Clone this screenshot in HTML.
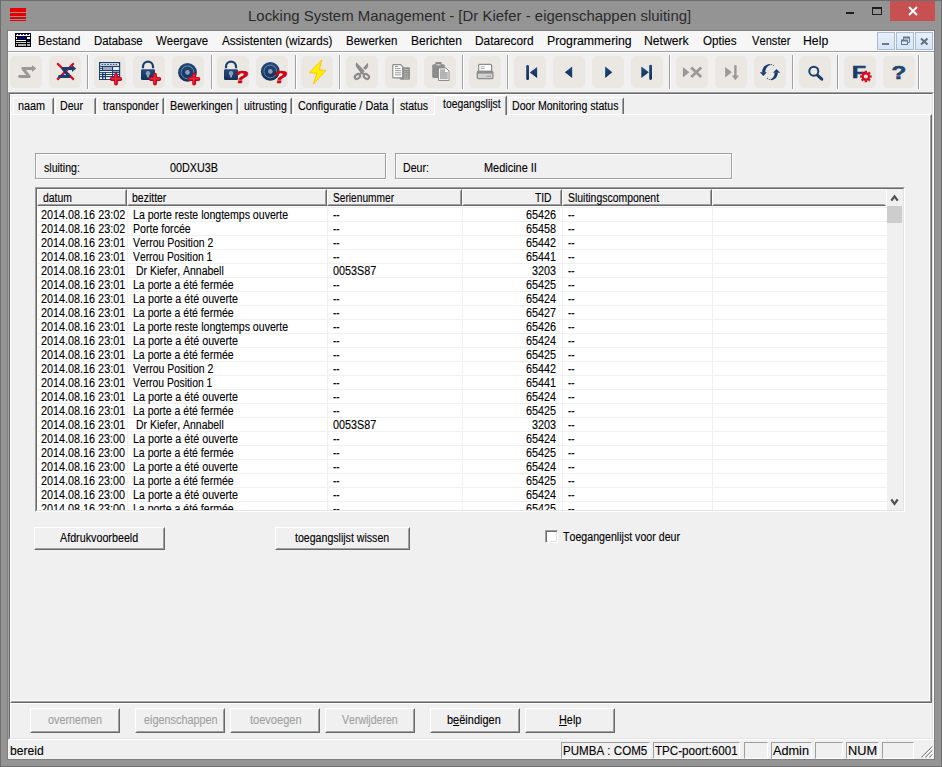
<!DOCTYPE html>
<html><head><meta charset="utf-8"><title>Locking System Management</title>
<style>
*{box-sizing:border-box;margin:0;padding:0}
html,body{width:942px;height:767px;overflow:hidden;background:#949494}
body{position:relative;font-family:"Liberation Sans",sans-serif;font-size:11px;color:#000}
.a{position:absolute}
#frame{left:0;top:0;width:942px;height:767px;border:1px solid #6e6e6e;background:#949494}
#frameb{left:7px;top:30px;width:928px;height:730px;border:1px solid #808080}
#title{left:0;top:6px;width:942px;text-align:center;font-size:15px;line-height:18px;color:#1a1a1a;white-space:nowrap;letter-spacing:-0.05px}
#menubar{left:8px;top:31px;width:926px;height:20px;background:#f6f6f7}
.mdi{top:32px;width:18px;height:18px;border:1px solid #a9bcd6;background:linear-gradient(#e8f0fa,#d7e5f6)}
#toolbar{left:8px;top:51px;width:926px;height:41px;background:#f0f0f0;border-top:1px solid #a0a0a0;box-shadow:inset 0 1px 0 #fff}
.tb{position:absolute;top:56px;width:32px;height:32px;border-radius:5px;background:#ebe8e3}
.sep{position:absolute;top:55px;width:2px;height:34px;border-left:1px solid #a0a0a0;border-right:1px solid #fff}
#child{left:8px;top:92px;width:926px;height:648px;background:#f0f0f0;border:1px solid #a0a0a0;border-right-color:#fff;border-bottom-color:#fff}
#child2{left:9px;top:93px;width:924px;height:646px;border:1px solid #696969;border-right-color:#e3e3e3;border-bottom-color:#e3e3e3}
#pane{left:10px;top:114px;width:922px;height:589px;border:1px solid #fff;border-right-color:#696969;border-bottom-color:#696969}
#pane:after{content:"";position:absolute;left:0;top:0;right:0;bottom:0;border:1px solid transparent;border-right-color:#a0a0a0;border-bottom-color:#a0a0a0;box-shadow:inset -1px -1px 0 #fbfbfb}
.tab.nr{border-right:none}.tab.nr:after{display:none}
.wl{position:absolute;background:#fff}
.tab{position:absolute;top:97px;height:17px;border-left:1px solid #fff;border-top:1px solid #fff;border-right:1px solid #696969;border-radius:2px 2px 0 0}
.tab:after{content:"";position:absolute;right:0;top:1px;bottom:0;width:1px;background:#a0a0a0}
.tab.sel{top:95px;height:20px;background:#f0f0f0}
.txt{position:absolute;white-space:pre;transform-origin:0 0;font-kerning:none;-webkit-text-stroke:0.12px}
.grp{position:absolute;border:1px solid #a0a0a0;box-shadow:inset 1px 1px 0 #fff,1px 1px 0 #fff}
.btn{position:absolute;background:#f0f0f0;border:1px solid #fff;border-right-color:#696969;border-bottom-color:#696969}
.btn:after{content:"";position:absolute;left:0;top:0;right:0;bottom:0;border:1px solid #f0f0f0;border-right-color:#a0a0a0;border-bottom-color:#a0a0a0}
#list{left:35px;top:187px;width:870px;height:325px;background:#fff;border:1px solid #a0a0a0;border-right-color:#fff;border-bottom-color:#fff}
#list2{left:36px;top:188px;width:868px;height:323px;border:1px solid #696969;border-right-color:#e3e3e3;border-bottom-color:#e3e3e3}
#rows{left:0;top:0;width:942px;height:510px;overflow:hidden}
.hd{position:absolute;top:189px;height:17px;background:#f0f0f0;border:1px solid #fff;border-right-color:#696969;border-bottom-color:#696969}
.hd:after{content:"";position:absolute;left:0;top:0;right:0;bottom:0;border:1px solid transparent;border-right-color:#a0a0a0;border-bottom-color:#a0a0a0}
.hd.last{border-right-color:#f0f0f0}.hd.last:after{border-right-color:transparent}
.hl{position:absolute;left:37px;width:850px;height:1px;background:#f0f0f0}
.vl{position:absolute;top:206px;width:1px;height:304px;background:#f0f0f0}
#cb{left:545px;top:530px;width:13px;height:13px;background:#fff;border:1px solid #a0a0a0;border-right-color:#fff;border-bottom-color:#fff;box-shadow:inset 1px 1px 0 #696969,inset -1px -1px 0 #e3e3e3}
#status{left:8px;top:740px;width:926px;height:19px;background:#f0f0f0}
.sp{position:absolute;top:742px;height:17px;border:1px solid #a0a0a0;border-right-color:#fff;border-bottom-color:#fff}
u{text-decoration:underline}
</style></head><body>
<svg width="0" height="0" style="position:absolute"><defs><linearGradient id="gb" x1="0" y1="0" x2="0" y2="1"><stop offset="0" stop-color="#234a7c"/><stop offset="1" stop-color="#11305a"/></linearGradient></defs></svg>
<div class="a" id="frame"></div><div class="a" id="frameb"></div>
<div class="a" style="left:10px;top:8px;width:16px;height:4px;background:#e60000"></div>
<div class="a" style="left:10px;top:13px;width:16px;height:3px;background:#e60000"></div>
<div class="a" style="left:10px;top:17px;width:16px;height:2px;background:#e60000"></div>
<div class="a" style="left:10px;top:20px;width:16px;height:1px;background:#e60000"></div>
<div class="txt " style="left:248.47px;top:5.70px;line-height:19px;font-size:15px;transform:scaleX(0.9973);color:#2b2b2b;-webkit-text-stroke:0;">Locking System Management - [Dr Kiefer - eigenschappen sluiting]</div>
<div class="a" style="left:846px;top:12px;width:8px;height:2px;background:#1e1e1e"></div>
<div class="a" style="left:872px;top:7px;width:10px;height:8px;border:1px solid #1e1e1e;border-top-width:2px"></div>
<div class="a" style="left:890px;top:1px;width:45px;height:20px;background:#c75050"></div>
<svg class="a" style="left:890px;top:1px" width="45" height="20" viewBox="0 0 45 20"><path d="M19 6 L27 14 M27 6 L19 14" stroke="#fff" stroke-width="2" fill="none"/></svg>
<div class="a" id="menubar"></div>
<svg class="a" style="left:15px;top:33px" width="16" height="14" viewBox="0 0 16 14" shape-rendering="crispEdges"><rect width="16" height="14" fill="#000"/><rect x="1" y="1" width="14" height="2" fill="#fff"/><path d="M1 1h1M3 1h2M6 1h2M9 1h2M12 1h2" stroke="#1010c0" stroke-width="1" transform="translate(0,0.5)"/><rect x="1" y="4" width="1" height="2" fill="#fff"/><rect x="3" y="4" width="8" height="2" fill="#000090"/><rect x="12" y="4" width="3" height="2" fill="#fff"/><rect x="1" y="7" width="10" height="1" fill="#fff"/><rect x="12" y="7" width="3" height="1" fill="#000090"/><rect x="1" y="9" width="10" height="1" fill="#d0d0d0"/><rect x="12" y="9" width="3" height="1" fill="#c0c0c0"/><rect x="1" y="11" width="1" height="2" fill="#c0c0c0"/><rect x="3" y="11" width="8" height="2" fill="#b0b0b0"/><rect x="12" y="11" width="3" height="2" fill="#b0b0b0"/></svg>

<div class="txt " style="left:37.65px;top:32.84px;line-height:16px;font-size:12px;transform:scaleX(0.9627);">Bestand</div>
<div class="txt " style="left:93.67px;top:32.84px;line-height:16px;font-size:12px;transform:scaleX(0.9468);">Database</div>
<div class="txt " style="left:156.45px;top:32.84px;line-height:16px;font-size:12px;transform:scaleX(0.9518);">Weergave</div>
<div class="txt " style="left:221.98px;top:32.84px;line-height:16px;font-size:12px;transform:scaleX(0.9676);">Assistenten (wizards)</div>
<div class="txt " style="left:345.95px;top:32.84px;line-height:16px;font-size:12px;transform:scaleX(0.9613);">Bewerken</div>
<div class="txt " style="left:410.51px;top:32.84px;line-height:16px;font-size:12px;transform:scaleX(1.0034);">Berichten</div>
<div class="txt " style="left:474.73px;top:32.84px;line-height:16px;font-size:12px;transform:scaleX(0.9861);">Datarecord</div>
<div class="txt " style="left:546.79px;top:32.84px;line-height:16px;font-size:12px;transform:scaleX(1.0230);">Programmering</div>
<div class="txt " style="left:644.30px;top:32.84px;line-height:16px;font-size:12px;transform:scaleX(1.0153);">Netwerk</div>
<div class="txt " style="left:703.35px;top:32.84px;line-height:16px;font-size:12px;transform:scaleX(0.9679);">Opties</div>
<div class="txt " style="left:751.75px;top:32.84px;line-height:16px;font-size:12px;transform:scaleX(0.9294);">Venster</div>
<div class="txt " style="left:803.49px;top:32.84px;line-height:16px;font-size:12px;transform:scaleX(1.0219);">Help</div>
<div class="a mdi" style="left:877px"></div>
<div class="a mdi" style="left:896px"></div>
<div class="a mdi" style="left:915px"></div>
<div class="a" style="left:882px;top:43px;width:7px;height:2px;background:#66788f"></div>
<svg class="a" style="left:896px;top:32px" width="18" height="18" viewBox="0 0 18 18"><path d="M7.5 8 V5.5 H13.5 V10.5 H11" stroke="#66788f" stroke-width="1" fill="none"/><path d="M7 5.5 H14" stroke="#66788f" stroke-width="2"/><rect x="5.5" y="8.5" width="6" height="4" fill="none" stroke="#66788f"/><path d="M5 8.5 H12" stroke="#66788f" stroke-width="2"/></svg>
<svg class="a" style="left:915px;top:32px" width="18" height="18" viewBox="0 0 18 18"><path d="M6 6.5 L12.5 12.5 M12.5 6.5 L6 12.5" stroke="#5f7088" stroke-width="2" fill="none"/></svg>
<div class="a" id="toolbar"></div>
<div class="tb" style="left:10px"></div>
<svg class="a" style="left:10px;top:56px" width="32" height="32" viewBox="0 0 32 32"><path d="M22.5 12.5 H12.8 L19.2 20.5 H9.6" stroke="#999999" stroke-width="2.9" stroke-linecap="round" stroke-linejoin="round" fill="none"/><path d="M22.0 8.9 L26.2 12.5 L22.0 16 Z" fill="#999999"/></svg>
<div class="tb" style="left:49px"></div>
<svg class="a" style="left:49px;top:56px" width="32" height="32" viewBox="0 0 32 32"><path d="M8.2 7.2 L24.8 23.6 M24.8 7.2 L8.2 23.6" stroke="#e4001c" stroke-width="2.2" fill="none"/><path d="M23.5 12.5 H13.8 L20.2 20.5 H10.6" stroke="#1b3f6d" stroke-width="2.9" stroke-linecap="round" stroke-linejoin="round" fill="none"/><path d="M23.0 8.9 L27.2 12.5 L23.0 16 Z" fill="#1b3f6d"/></svg>
<div class="tb" style="left:94px"></div>
<svg class="a" style="left:94px;top:56px" width="32" height="32" viewBox="0 0 32 32"><rect x="5" y="6" width="21.2" height="18" fill="#1b3f6d"/><rect x="6.2" y="7.2" width="18.8" height="2.6" rx="0.6" fill="#fff"/><path d="M7.5 8.5 H24" stroke="#1b3f6d" stroke-width="0.9" stroke-dasharray="1.8 1"/><path d="M6 11.4 H8 M6 13.4 H8" stroke="#fff" stroke-width="0.9"/><rect x="9" y="11" width="9" height="3" fill="#9aa9c0"/><rect x="19.1" y="11" width="6" height="3" fill="#e4e8ee"/><path d="M6 15.6 H18" stroke="#fff" stroke-width="1"/><path d="M19 15.6 H25" stroke="#9aa9c0" stroke-width="1"/><path d="M6 17.5 H8 M12 17.5 H18 M19 17.5 H25 M6 19.5 H8 M12 19.5 H18 M19 19.5 H25" stroke="#fff" stroke-width="1"/><path d="M9.3 17.5 H11 M9.3 19.5 H11" stroke="#b8c3d3" stroke-width="1"/><rect x="6" y="21.2" width="2" height="1.8" fill="#fff"/><rect x="9.3" y="21.2" width="1.7" height="1.8" fill="#d0d7e2"/><rect x="12" y="21.2" width="6" height="1.8" fill="#fff"/><path d="M17.7 23.0 H26.3 M22.0 18.7 V27.5" stroke="#c80018" stroke-width="3.8" stroke-linecap="round" fill="none"/><path d="M17.7 22.6 H26.3 M21.7 18.7 V27.3" stroke="#e8283c" stroke-width="1.6" stroke-linecap="round" fill="none"/></svg>
<div class="tb" style="left:133px"></div>
<svg class="a" style="left:133px;top:56px" width="32" height="32" viewBox="0 0 32 32"><path d="M10.0 12.2 V10.6 A5 5 0 0 1 20.0 10.6 V12.2" stroke="#1b3f6d" stroke-width="2.2" fill="none"/><rect x="8.0" y="13.2" width="14" height="10.8" rx="1.2" fill="url(#gb)"/><circle cx="15.0" cy="17.3" r="2.2" fill="#8e9fb8"/><rect x="13.9" y="17.5" width="2.2" height="4" rx="0.8" fill="#8e9fb8"/><path d="M17.7 23.0 H26.3 M22.0 18.7 V27.5" stroke="#c80018" stroke-width="3.8" stroke-linecap="round" fill="none"/><path d="M17.7 22.6 H26.3 M21.7 18.7 V27.3" stroke="#e8283c" stroke-width="1.6" stroke-linecap="round" fill="none"/></svg>
<div class="tb" style="left:172px"></div>
<svg class="a" style="left:172px;top:56px" width="32" height="32" viewBox="0 0 32 32"><circle cx="15.5" cy="16.4" r="9.4" fill="url(#gb)"/><circle cx="15.5" cy="16.4" r="6.4" fill="none" stroke="#8496b2" stroke-width="0.8"/><circle cx="15.5" cy="16.4" r="2.3" fill="#8e9fb8"/><path d="M17.8 23.0 H26.4 M22.1 18.7 V27.5" stroke="#c80018" stroke-width="3.8" stroke-linecap="round" fill="none"/><path d="M17.8 22.6 H26.4 M21.8 18.7 V27.3" stroke="#e8283c" stroke-width="1.6" stroke-linecap="round" fill="none"/></svg>
<div class="tb" style="left:217px"></div>
<svg class="a" style="left:217px;top:56px" width="32" height="32" viewBox="0 0 32 32"><path d="M9.0 12.2 V10.6 A5 5 0 0 1 19.0 10.6 V12.2" stroke="#1b3f6d" stroke-width="2.2" fill="none"/><rect x="7.0" y="13.2" width="14" height="10.8" rx="1.2" fill="url(#gb)"/><circle cx="14.0" cy="17.3" r="2.2" fill="#8e9fb8"/><rect x="12.9" y="17.5" width="2.2" height="4" rx="0.8" fill="#8e9fb8"/><text transform="translate(16.2 27.2) skewX(-9) scale(1.36 1)" font-family="Liberation Sans,sans-serif" font-weight="bold" font-size="17.3" fill="#d00010" stroke="#d00010" stroke-width="0.6">?</text></svg>
<div class="tb" style="left:256px"></div>
<svg class="a" style="left:256px;top:56px" width="32" height="32" viewBox="0 0 32 32"><circle cx="14.3" cy="15.4" r="9.4" fill="url(#gb)"/><circle cx="14.3" cy="15.4" r="6.4" fill="none" stroke="#8496b2" stroke-width="0.8"/><circle cx="14.3" cy="15.4" r="2.3" fill="#8e9fb8"/><text transform="translate(16.2 27.2) skewX(-9) scale(1.36 1)" font-family="Liberation Sans,sans-serif" font-weight="bold" font-size="17.3" fill="#d00010" stroke="#d00010" stroke-width="0.6">?</text></svg>
<div class="tb" style="left:301px"></div>
<svg class="a" style="left:301px;top:56px" width="32" height="32" viewBox="0 0 32 32"><path d="M20.8 3.9 L8.3 16.7 L16 17.3 L12.4 28 L24.8 14.5 L18.3 13.8 Z" fill="#fff200" stroke="#ffc20a" stroke-width="1" stroke-linejoin="round"/></svg>
<div class="tb" style="left:346px"></div>
<svg class="a" style="left:346px;top:56px" width="32" height="32" viewBox="0 0 32 32"><g fill="#8b8b8b"><path d="M10 6.6 L11 7 L19 15.3 L17.3 15.8 L15.8 17.4 L13.4 15.2 L9.7 10 Z"/><path d="M21.7 6.8 L22.2 9.5 L21.4 12 L19.5 13.7 L17.1 12Z"/></g><g fill="none" stroke="#8b8b8b" stroke-width="2.1"><ellipse cx="11.4" cy="20.5" rx="2.9" ry="2.1" transform="rotate(-35 11.4 20.5)"/><ellipse cx="20.4" cy="20.5" rx="2.9" ry="2.1" transform="rotate(35 20.4 20.5)"/><path d="M13.8 18.3 L17 15.5 M18 18.3 L14.8 15.5"/></g></svg>
<div class="tb" style="left:385px"></div>
<svg class="a" style="left:385px;top:56px" width="32" height="32" viewBox="0 0 32 32"><rect x="14.6" y="11.2" width="10.4" height="12.6" rx="1.2" fill="#909090"/><path d="M19 13.5 H23.5 M19 15.7 H21 M22 15.7 H23.5 M19 17.9 H23.5 M19 20.1 H21 M22 20.1 H23.5 M19 22.2 H23.5" stroke="#b9b9b9" stroke-width="0.9"/><path d="M8.4 8.7 H15.6 L17.7 10.8 V21.2 Q17.7 21.8 17.1 21.8 H8.4 Q7.8 21.8 7.8 21.2 V9.3 Q7.8 8.7 8.4 8.7Z" fill="#fff" stroke="#8c8c8c" stroke-width="1.2"/><path d="M10 10.5 H13.3 M10 12.6 H15.6 M10 14.7 H16.2 M10 16.8 H16.2 M10 18.9 H16.2" stroke="#8c8c8c" stroke-width="0.9"/></svg>
<div class="tb" style="left:424px"></div>
<svg class="a" style="left:424px;top:56px" width="32" height="32" viewBox="0 0 32 32"><rect x="8.2" y="8.2" width="12.6" height="13.8" rx="1.6" fill="#8c8c8c"/><rect x="11.3" y="6" width="6.4" height="4.2" rx="1" fill="#8c8c8c"/><rect x="12.4" y="8" width="4.2" height="1.6" fill="#c4c4c4"/><path d="M14.6 12 H22 L25 15 V24.5 H14.6Z" fill="#fff" stroke="#8c8c8c" stroke-width="1" stroke-linejoin="round"/><path d="M16 13.3 H21 V16 H23.8 V23.3 H16Z" fill="#b4b4b4"/></svg>
<div class="tb" style="left:469px"></div>
<svg class="a" style="left:469px;top:56px" width="32" height="32" viewBox="0 0 32 32"><rect x="9.6" y="8.4" width="13" height="7" rx="1" fill="#fff" stroke="#8c8c8c" stroke-width="1.2"/><path d="M11.6 10.7 H15.8 M11.6 12.5 H15.8" stroke="#a8a8a8" stroke-width="0.9"/><rect x="8.3" y="15.3" width="15.6" height="7.4" rx="1.2" fill="#d2d2d2" stroke="#8c8c8c" stroke-width="1.3"/><rect x="8.6" y="15" width="15" height="2.6" fill="#8c8c8c"/><path d="M17.5 20.3 H22" stroke="#9a9a9a" stroke-width="1"/></svg>
<div class="tb" style="left:514px"></div>
<svg class="a" style="left:514px;top:56px" width="32" height="32" viewBox="0 0 32 32"><rect x="12.2" y="9" width="2.8" height="15" rx="1.3" fill="url(#gb)"/><path d="M15.8 16.4 L23.1 10.9 V21.9Z" fill="url(#gb)"/></svg>
<div class="tb" style="left:553px"></div>
<svg class="a" style="left:553px;top:56px" width="32" height="32" viewBox="0 0 32 32"><path d="M11.8 16.3 L19.2 10.6 V22Z" fill="url(#gb)"/></svg>
<div class="tb" style="left:592px"></div>
<svg class="a" style="left:592px;top:56px" width="32" height="32" viewBox="0 0 32 32"><path d="M20.3 16.3 L13.2 10.6 V22Z" fill="url(#gb)"/></svg>
<div class="tb" style="left:631px"></div>
<svg class="a" style="left:631px;top:56px" width="32" height="32" viewBox="0 0 32 32"><path d="M17.9 16.3 L10.3 10.6 V22Z" fill="url(#gb)"/><rect x="18.2" y="8.8" width="2.8" height="15.1" rx="1.3" fill="url(#gb)"/></svg>
<div class="tb" style="left:676px"></div>
<svg class="a" style="left:676px;top:56px" width="32" height="32" viewBox="0 0 32 32"><path d="M13.4 16.3 L6.9 10.9 V21.6Z" fill="#999"/><path d="M15.2 11.6 L25.2 21 M25.2 11.6 L15.2 21" stroke="#999" stroke-width="2.7" fill="none"/></svg>
<div class="tb" style="left:715px"></div>
<svg class="a" style="left:715px;top:56px" width="32" height="32" viewBox="0 0 32 32"><path d="M16.9 16.3 L10.1 10.9 V21.6Z" fill="#999"/><path d="M20.4 9.2 V20.5" stroke="#999" stroke-width="2.4"/><path d="M16.8 19.6 H24 L20.4 24.2Z" fill="#999"/></svg>
<div class="tb" style="left:754px"></div>
<svg class="a" style="left:754px;top:56px" width="32" height="32" viewBox="0 0 32 32"><g fill="#193d6a"><path d="M5.8 16.3 L12.9 16.3 L9.4 19.9 Z"/><path d="M8.1 16.5 C8.1 11.5 11.5 8.2 16 8.1 L16.7 9 C13.5 9.6 11.3 12.5 11.3 16.5 Z"/><path d="M19 16.7 L26.1 16.7 L22.5 13.1 Z"/><path d="M23.8 16.5 C23.8 21 21 23.9 17 24.2 L16.4 23.2 C19 22.6 20.6 20 20.6 16.5 Z"/><circle cx="17.4" cy="8.6" r="0.55"/><circle cx="19.4" cy="9.5" r="0.55"/><circle cx="15.3" cy="23.5" r="0.55"/><circle cx="13.4" cy="22.4" r="0.55"/></g></svg>
<div class="tb" style="left:799px"></div>
<svg class="a" style="left:799px;top:56px" width="32" height="32" viewBox="0 0 32 32"><circle cx="14.8" cy="15.2" r="4.5" fill="none" stroke="#1b3f6d" stroke-width="2"/><path d="M18.6 19.3 L22.8 23.2" stroke="#1b3f6d" stroke-width="3" stroke-linecap="round"/></svg>
<div class="tb" style="left:844px"></div>
<svg class="a" style="left:844px;top:56px" width="32" height="32" viewBox="0 0 32 32"><text transform="translate(8.1 21.7) scale(1.34 1)" font-family="Liberation Sans,sans-serif" font-weight="bold" font-size="17" fill="url(#gb)" stroke="#183b68" stroke-width="0.7">F</text><path d="M27.67 19.25 L27.67 21.75 L26.01 21.60 L25.57 22.66 L26.85 23.73 L25.08 25.50 L24.01 24.22 L22.95 24.66 L23.10 26.32 L20.60 26.32 L20.75 24.66 L19.69 24.22 L18.62 25.50 L16.85 23.73 L18.13 22.66 L17.69 21.60 L16.03 21.75 L16.03 19.25 L17.69 19.40 L18.13 18.34 L16.85 17.27 L18.62 15.50 L19.69 16.78 L20.75 16.34 L20.60 14.68 L23.10 14.68 L22.95 16.34 L24.01 16.78 L25.08 15.50 L26.85 17.27 L25.57 18.34 L26.01 19.40Z M19.75 20.50 a2.10 2.10 0 1 0 4.20 0 a2.10 2.10 0 1 0 -4.20 0Z" fill="#d80a20" fill-rule="evenodd"/></svg>
<div class="tb" style="left:883px"></div>
<svg class="a" style="left:883px;top:56px" width="32" height="32" viewBox="0 0 32 32"><text transform="translate(8.5 23) scale(1.26 1)" font-family="Liberation Sans,sans-serif" font-weight="bold" font-size="19.2" fill="#1f4674" stroke="#1f4674" stroke-width="0.6">?</text></svg>
<div class="sep" style="left:87px"></div>
<div class="sep" style="left:211px"></div>
<div class="sep" style="left:295px"></div>
<div class="sep" style="left:339px"></div>
<div class="sep" style="left:462px"></div>
<div class="sep" style="left:507px"></div>
<div class="sep" style="left:669px"></div>
<div class="sep" style="left:792px"></div>
<div class="sep" style="left:837px"></div>
<div class="sep" style="left:918px"></div>
<div class="a" id="child"></div><div class="a" id="child2"></div>
<div class="a" id="pane"></div>
<div class="wl" style="left:10px;top:94px;width:922px;height:1px"></div><div class="wl" style="left:10px;top:94px;width:1px;height:20px"></div>
<div class="wl" style="left:10px;top:703px;width:922px;height:1px"></div><div class="wl" style="left:10px;top:703px;width:1px;height:35px"></div>
<div class="tab" style="left:13px;width:41px"></div>
<div class="txt " style="left:17.98px;top:97.84px;line-height:16px;font-size:12px;transform:scaleX(0.9005);">naam</div>
<div class="tab" style="left:55px;width:41px"></div>
<div class="txt " style="left:60.03px;top:97.84px;line-height:16px;font-size:12px;transform:scaleX(0.8850);">Deur</div>
<div class="tab" style="left:97px;width:67px"></div>
<div class="txt " style="left:102.54px;top:97.84px;line-height:16px;font-size:12px;transform:scaleX(0.8686);">transponder</div>
<div class="tab" style="left:165px;width:73px"></div>
<div class="txt " style="left:170.31px;top:97.84px;line-height:16px;font-size:12px;transform:scaleX(0.9022);">Bewerkingen</div>
<div class="tab" style="left:239px;width:53px"></div>
<div class="txt " style="left:243.92px;top:97.84px;line-height:16px;font-size:12px;transform:scaleX(0.8783);">uitrusting</div>
<div class="tab" style="left:293px;width:101px"></div>
<div class="txt " style="left:298.25px;top:97.84px;line-height:16px;font-size:12px;transform:scaleX(0.9020);">Configuratie / Data</div>
<div class="tab nr" style="left:395px;width:38px"></div>
<div class="txt " style="left:400.41px;top:97.84px;line-height:16px;font-size:12px;transform:scaleX(0.8737);">status</div>
<div class="tab" style="left:509px;width:115px"></div>
<div class="txt " style="left:512.13px;top:97.84px;line-height:16px;font-size:12px;transform:scaleX(0.8818);">Door Monitoring status</div>
<div class="tab sel" style="left:434px;width:73px"></div>
<div class="txt " style="left:442.84px;top:95.84px;line-height:16px;font-size:12px;transform:scaleX(0.8624);">toegangslijst</div>
<div class="grp" style="left:35px;top:153px;width:351px;height:26px"></div>
<div class="grp" style="left:395px;top:153px;width:337px;height:26px"></div>
<div class="txt " style="left:43.51px;top:159.84px;line-height:16px;font-size:12px;transform:scaleX(0.8814);">sluiting:</div>
<div class="txt " style="left:170.08px;top:159.84px;line-height:16px;font-size:12px;transform:scaleX(0.8994);">00DXU3B</div>
<div class="txt " style="left:403.03px;top:159.84px;line-height:16px;font-size:12px;transform:scaleX(0.8840);">Deur:</div>
<div class="txt " style="left:484.30px;top:159.84px;line-height:16px;font-size:12px;transform:scaleX(0.9118);">Medicine II</div>
<div class="a" id="list"></div><div class="a" id="list2"></div>
<div class="hd" style="left:37px;width:90px"></div>
<div class="hd" style="left:127px;width:200px"></div>
<div class="hd" style="left:327px;width:135px"></div>
<div class="hd" style="left:462px;width:100px"></div>
<div class="hd" style="left:562px;width:150px"></div>
<div class="hd last" style="left:712px;width:174px"></div>
<div class="txt " style="left:42.76px;top:189.84px;line-height:16px;font-size:12px;transform:scaleX(0.8672);">datum</div>
<div class="txt " style="left:132.32px;top:189.84px;line-height:16px;font-size:12px;transform:scaleX(0.8729);">bezitter</div>
<div class="txt " style="left:332.74px;top:189.84px;line-height:16px;font-size:12px;transform:scaleX(0.8488);">Serienummer</div>
<div class="txt " style="left:535.47px;top:189.84px;line-height:16px;font-size:12px;transform:scaleX(0.8547);">TID</div>
<div class="txt " style="left:567.53px;top:189.84px;line-height:16px;font-size:12px;transform:scaleX(0.8694);">Sluitingscomponent</div>
<div class="vl" style="left:127px"></div>
<div class="vl" style="left:327px"></div>
<div class="vl" style="left:462px"></div>
<div class="vl" style="left:562px"></div>
<div class="vl" style="left:712px"></div>
<div class="a" id="rows">
<div class="hl" style="top:207px"></div>
<div class="hl" style="top:221px"></div>
<div class="txt " style="left:41.16px;top:206.84px;line-height:16px;font-size:12px;transform:scaleX(0.9012);">2014.08.16 23:02</div>
<div class="txt " style="left:132.93px;top:206.84px;line-height:16px;font-size:12px;transform:scaleX(0.8809);">La porte reste longtemps ouverte</div>
<div class="txt " style="left:332.97px;top:206.84px;line-height:16px;font-size:12px;transform:scaleX(0.8086);">--</div>
<div class="txt " style="left:525.74px;top:206.84px;line-height:16px;font-size:12px;transform:scaleX(0.9000);">65426</div>
<div class="txt " style="left:567.77px;top:206.84px;line-height:16px;font-size:12px;transform:scaleX(0.8086);">--</div>
<div class="hl" style="top:235px"></div>
<div class="txt " style="left:41.16px;top:220.84px;line-height:16px;font-size:12px;transform:scaleX(0.9012);">2014.08.16 23:02</div>
<div class="txt " style="left:132.93px;top:220.84px;line-height:16px;font-size:12px;transform:scaleX(0.8833);">Porte forcée</div>
<div class="txt " style="left:332.97px;top:220.84px;line-height:16px;font-size:12px;transform:scaleX(0.8086);">--</div>
<div class="txt " style="left:525.74px;top:220.84px;line-height:16px;font-size:12px;transform:scaleX(0.9000);">65458</div>
<div class="txt " style="left:567.77px;top:220.84px;line-height:16px;font-size:12px;transform:scaleX(0.8086);">--</div>
<div class="hl" style="top:249px"></div>
<div class="txt " style="left:41.16px;top:234.84px;line-height:16px;font-size:12px;transform:scaleX(0.9010);">2014.08.16 23:01</div>
<div class="txt " style="left:133.45px;top:234.84px;line-height:16px;font-size:12px;transform:scaleX(0.8720);">Verrou Position 2</div>
<div class="txt " style="left:332.97px;top:234.84px;line-height:16px;font-size:12px;transform:scaleX(0.8086);">--</div>
<div class="txt " style="left:525.81px;top:234.84px;line-height:16px;font-size:12px;transform:scaleX(0.9000);">65442</div>
<div class="txt " style="left:567.77px;top:234.84px;line-height:16px;font-size:12px;transform:scaleX(0.8086);">--</div>
<div class="hl" style="top:263px"></div>
<div class="txt " style="left:41.16px;top:248.84px;line-height:16px;font-size:12px;transform:scaleX(0.9010);">2014.08.16 23:01</div>
<div class="txt " style="left:133.45px;top:248.84px;line-height:16px;font-size:12px;transform:scaleX(0.8609);">Verrou Position 1</div>
<div class="txt " style="left:332.97px;top:248.84px;line-height:16px;font-size:12px;transform:scaleX(0.8086);">--</div>
<div class="txt " style="left:525.80px;top:248.84px;line-height:16px;font-size:12px;transform:scaleX(0.9000);">65441</div>
<div class="txt " style="left:567.77px;top:248.84px;line-height:16px;font-size:12px;transform:scaleX(0.8086);">--</div>
<div class="hl" style="top:277px"></div>
<div class="txt " style="left:41.16px;top:262.84px;line-height:16px;font-size:12px;transform:scaleX(0.9010);">2014.08.16 23:01</div>
<div class="txt " style="left:136.34px;top:262.84px;line-height:16px;font-size:12px;transform:scaleX(0.8713);">Dr Kiefer, Annabell</div>
<div class="txt " style="left:333.08px;top:262.84px;line-height:16px;font-size:12px;transform:scaleX(0.9000);">0053S87</div>
<div class="txt " style="left:531.75px;top:262.84px;line-height:16px;font-size:12px;transform:scaleX(0.9000);">3203</div>
<div class="txt " style="left:567.77px;top:262.84px;line-height:16px;font-size:12px;transform:scaleX(0.8086);">--</div>
<div class="hl" style="top:291px"></div>
<div class="txt " style="left:41.16px;top:276.84px;line-height:16px;font-size:12px;transform:scaleX(0.9010);">2014.08.16 23:01</div>
<div class="txt " style="left:132.94px;top:276.84px;line-height:16px;font-size:12px;transform:scaleX(0.8770);">La porte a été fermée</div>
<div class="txt " style="left:332.97px;top:276.84px;line-height:16px;font-size:12px;transform:scaleX(0.8086);">--</div>
<div class="txt " style="left:525.72px;top:276.84px;line-height:16px;font-size:12px;transform:scaleX(0.9000);">65425</div>
<div class="txt " style="left:567.77px;top:276.84px;line-height:16px;font-size:12px;transform:scaleX(0.8086);">--</div>
<div class="hl" style="top:305px"></div>
<div class="txt " style="left:41.16px;top:290.84px;line-height:16px;font-size:12px;transform:scaleX(0.9010);">2014.08.16 23:01</div>
<div class="txt " style="left:132.92px;top:290.84px;line-height:16px;font-size:12px;transform:scaleX(0.8939);">La porte a été ouverte</div>
<div class="txt " style="left:332.97px;top:290.84px;line-height:16px;font-size:12px;transform:scaleX(0.8086);">--</div>
<div class="txt " style="left:525.58px;top:290.84px;line-height:16px;font-size:12px;transform:scaleX(0.9000);">65424</div>
<div class="txt " style="left:567.77px;top:290.84px;line-height:16px;font-size:12px;transform:scaleX(0.8086);">--</div>
<div class="hl" style="top:319px"></div>
<div class="txt " style="left:41.16px;top:304.84px;line-height:16px;font-size:12px;transform:scaleX(0.9010);">2014.08.16 23:01</div>
<div class="txt " style="left:132.94px;top:304.84px;line-height:16px;font-size:12px;transform:scaleX(0.8770);">La porte a été fermée</div>
<div class="txt " style="left:332.97px;top:304.84px;line-height:16px;font-size:12px;transform:scaleX(0.8086);">--</div>
<div class="txt " style="left:525.81px;top:304.84px;line-height:16px;font-size:12px;transform:scaleX(0.9000);">65427</div>
<div class="txt " style="left:567.77px;top:304.84px;line-height:16px;font-size:12px;transform:scaleX(0.8086);">--</div>
<div class="hl" style="top:333px"></div>
<div class="txt " style="left:41.16px;top:318.84px;line-height:16px;font-size:12px;transform:scaleX(0.9010);">2014.08.16 23:01</div>
<div class="txt " style="left:132.93px;top:318.84px;line-height:16px;font-size:12px;transform:scaleX(0.8809);">La porte reste longtemps ouverte</div>
<div class="txt " style="left:332.97px;top:318.84px;line-height:16px;font-size:12px;transform:scaleX(0.8086);">--</div>
<div class="txt " style="left:525.74px;top:318.84px;line-height:16px;font-size:12px;transform:scaleX(0.9000);">65426</div>
<div class="txt " style="left:567.77px;top:318.84px;line-height:16px;font-size:12px;transform:scaleX(0.8086);">--</div>
<div class="hl" style="top:347px"></div>
<div class="txt " style="left:41.16px;top:332.84px;line-height:16px;font-size:12px;transform:scaleX(0.9010);">2014.08.16 23:01</div>
<div class="txt " style="left:132.92px;top:332.84px;line-height:16px;font-size:12px;transform:scaleX(0.8939);">La porte a été ouverte</div>
<div class="txt " style="left:332.97px;top:332.84px;line-height:16px;font-size:12px;transform:scaleX(0.8086);">--</div>
<div class="txt " style="left:525.58px;top:332.84px;line-height:16px;font-size:12px;transform:scaleX(0.9000);">65424</div>
<div class="txt " style="left:567.77px;top:332.84px;line-height:16px;font-size:12px;transform:scaleX(0.8086);">--</div>
<div class="hl" style="top:361px"></div>
<div class="txt " style="left:41.16px;top:346.84px;line-height:16px;font-size:12px;transform:scaleX(0.9010);">2014.08.16 23:01</div>
<div class="txt " style="left:132.94px;top:346.84px;line-height:16px;font-size:12px;transform:scaleX(0.8770);">La porte a été fermée</div>
<div class="txt " style="left:332.97px;top:346.84px;line-height:16px;font-size:12px;transform:scaleX(0.8086);">--</div>
<div class="txt " style="left:525.72px;top:346.84px;line-height:16px;font-size:12px;transform:scaleX(0.9000);">65425</div>
<div class="txt " style="left:567.77px;top:346.84px;line-height:16px;font-size:12px;transform:scaleX(0.8086);">--</div>
<div class="hl" style="top:375px"></div>
<div class="txt " style="left:41.16px;top:360.84px;line-height:16px;font-size:12px;transform:scaleX(0.9010);">2014.08.16 23:01</div>
<div class="txt " style="left:133.45px;top:360.84px;line-height:16px;font-size:12px;transform:scaleX(0.8720);">Verrou Position 2</div>
<div class="txt " style="left:332.97px;top:360.84px;line-height:16px;font-size:12px;transform:scaleX(0.8086);">--</div>
<div class="txt " style="left:525.81px;top:360.84px;line-height:16px;font-size:12px;transform:scaleX(0.9000);">65442</div>
<div class="txt " style="left:567.77px;top:360.84px;line-height:16px;font-size:12px;transform:scaleX(0.8086);">--</div>
<div class="hl" style="top:389px"></div>
<div class="txt " style="left:41.16px;top:374.84px;line-height:16px;font-size:12px;transform:scaleX(0.9010);">2014.08.16 23:01</div>
<div class="txt " style="left:133.45px;top:374.84px;line-height:16px;font-size:12px;transform:scaleX(0.8609);">Verrou Position 1</div>
<div class="txt " style="left:332.97px;top:374.84px;line-height:16px;font-size:12px;transform:scaleX(0.8086);">--</div>
<div class="txt " style="left:525.80px;top:374.84px;line-height:16px;font-size:12px;transform:scaleX(0.9000);">65441</div>
<div class="txt " style="left:567.77px;top:374.84px;line-height:16px;font-size:12px;transform:scaleX(0.8086);">--</div>
<div class="hl" style="top:403px"></div>
<div class="txt " style="left:41.16px;top:388.84px;line-height:16px;font-size:12px;transform:scaleX(0.9010);">2014.08.16 23:01</div>
<div class="txt " style="left:132.92px;top:388.84px;line-height:16px;font-size:12px;transform:scaleX(0.8939);">La porte a été ouverte</div>
<div class="txt " style="left:332.97px;top:388.84px;line-height:16px;font-size:12px;transform:scaleX(0.8086);">--</div>
<div class="txt " style="left:525.58px;top:388.84px;line-height:16px;font-size:12px;transform:scaleX(0.9000);">65424</div>
<div class="txt " style="left:567.77px;top:388.84px;line-height:16px;font-size:12px;transform:scaleX(0.8086);">--</div>
<div class="hl" style="top:417px"></div>
<div class="txt " style="left:41.16px;top:402.84px;line-height:16px;font-size:12px;transform:scaleX(0.9010);">2014.08.16 23:01</div>
<div class="txt " style="left:132.94px;top:402.84px;line-height:16px;font-size:12px;transform:scaleX(0.8770);">La porte a été fermée</div>
<div class="txt " style="left:332.97px;top:402.84px;line-height:16px;font-size:12px;transform:scaleX(0.8086);">--</div>
<div class="txt " style="left:525.72px;top:402.84px;line-height:16px;font-size:12px;transform:scaleX(0.9000);">65425</div>
<div class="txt " style="left:567.77px;top:402.84px;line-height:16px;font-size:12px;transform:scaleX(0.8086);">--</div>
<div class="hl" style="top:431px"></div>
<div class="txt " style="left:41.16px;top:416.84px;line-height:16px;font-size:12px;transform:scaleX(0.9010);">2014.08.16 23:01</div>
<div class="txt " style="left:136.34px;top:416.84px;line-height:16px;font-size:12px;transform:scaleX(0.8713);">Dr Kiefer, Annabell</div>
<div class="txt " style="left:333.08px;top:416.84px;line-height:16px;font-size:12px;transform:scaleX(0.9000);">0053S87</div>
<div class="txt " style="left:531.75px;top:416.84px;line-height:16px;font-size:12px;transform:scaleX(0.9000);">3203</div>
<div class="txt " style="left:567.77px;top:416.84px;line-height:16px;font-size:12px;transform:scaleX(0.8086);">--</div>
<div class="hl" style="top:445px"></div>
<div class="txt " style="left:41.16px;top:430.84px;line-height:16px;font-size:12px;transform:scaleX(0.8998);">2014.08.16 23:00</div>
<div class="txt " style="left:132.92px;top:430.84px;line-height:16px;font-size:12px;transform:scaleX(0.8939);">La porte a été ouverte</div>
<div class="txt " style="left:332.97px;top:430.84px;line-height:16px;font-size:12px;transform:scaleX(0.8086);">--</div>
<div class="txt " style="left:525.58px;top:430.84px;line-height:16px;font-size:12px;transform:scaleX(0.9000);">65424</div>
<div class="txt " style="left:567.77px;top:430.84px;line-height:16px;font-size:12px;transform:scaleX(0.8086);">--</div>
<div class="hl" style="top:459px"></div>
<div class="txt " style="left:41.16px;top:444.84px;line-height:16px;font-size:12px;transform:scaleX(0.8998);">2014.08.16 23:00</div>
<div class="txt " style="left:132.94px;top:444.84px;line-height:16px;font-size:12px;transform:scaleX(0.8770);">La porte a été fermée</div>
<div class="txt " style="left:332.97px;top:444.84px;line-height:16px;font-size:12px;transform:scaleX(0.8086);">--</div>
<div class="txt " style="left:525.72px;top:444.84px;line-height:16px;font-size:12px;transform:scaleX(0.9000);">65425</div>
<div class="txt " style="left:567.77px;top:444.84px;line-height:16px;font-size:12px;transform:scaleX(0.8086);">--</div>
<div class="hl" style="top:473px"></div>
<div class="txt " style="left:41.16px;top:458.84px;line-height:16px;font-size:12px;transform:scaleX(0.8998);">2014.08.16 23:00</div>
<div class="txt " style="left:132.92px;top:458.84px;line-height:16px;font-size:12px;transform:scaleX(0.8939);">La porte a été ouverte</div>
<div class="txt " style="left:332.97px;top:458.84px;line-height:16px;font-size:12px;transform:scaleX(0.8086);">--</div>
<div class="txt " style="left:525.58px;top:458.84px;line-height:16px;font-size:12px;transform:scaleX(0.9000);">65424</div>
<div class="txt " style="left:567.77px;top:458.84px;line-height:16px;font-size:12px;transform:scaleX(0.8086);">--</div>
<div class="hl" style="top:487px"></div>
<div class="txt " style="left:41.16px;top:472.84px;line-height:16px;font-size:12px;transform:scaleX(0.8998);">2014.08.16 23:00</div>
<div class="txt " style="left:132.94px;top:472.84px;line-height:16px;font-size:12px;transform:scaleX(0.8770);">La porte a été fermée</div>
<div class="txt " style="left:332.97px;top:472.84px;line-height:16px;font-size:12px;transform:scaleX(0.8086);">--</div>
<div class="txt " style="left:525.72px;top:472.84px;line-height:16px;font-size:12px;transform:scaleX(0.9000);">65425</div>
<div class="txt " style="left:567.77px;top:472.84px;line-height:16px;font-size:12px;transform:scaleX(0.8086);">--</div>
<div class="hl" style="top:501px"></div>
<div class="txt " style="left:41.16px;top:486.84px;line-height:16px;font-size:12px;transform:scaleX(0.8998);">2014.08.16 23:00</div>
<div class="txt " style="left:132.92px;top:486.84px;line-height:16px;font-size:12px;transform:scaleX(0.8939);">La porte a été ouverte</div>
<div class="txt " style="left:332.97px;top:486.84px;line-height:16px;font-size:12px;transform:scaleX(0.8086);">--</div>
<div class="txt " style="left:525.58px;top:486.84px;line-height:16px;font-size:12px;transform:scaleX(0.9000);">65424</div>
<div class="txt " style="left:567.77px;top:486.84px;line-height:16px;font-size:12px;transform:scaleX(0.8086);">--</div>
<div class="hl" style="top:515px"></div>
<div class="txt " style="left:41.16px;top:500.84px;line-height:16px;font-size:12px;transform:scaleX(0.8998);">2014.08.16 23:00</div>
<div class="txt " style="left:132.94px;top:500.84px;line-height:16px;font-size:12px;transform:scaleX(0.8770);">La porte a été fermée</div>
<div class="txt " style="left:332.97px;top:500.84px;line-height:16px;font-size:12px;transform:scaleX(0.8086);">--</div>
<div class="txt " style="left:525.72px;top:500.84px;line-height:16px;font-size:12px;transform:scaleX(0.9000);">65425</div>
<div class="txt " style="left:567.77px;top:500.84px;line-height:16px;font-size:12px;transform:scaleX(0.8086);">--</div>
</div>
<div class="a" style="left:887px;top:189px;width:16px;height:321px;background:#f0f0f0"></div>
<div class="a" style="left:887px;top:206px;width:15px;height:17px;background:#cdcdcd"></div>
<svg class="a" style="left:887px;top:189px" width="16" height="17" viewBox="0 0 16 17"><path d="M4.3 11.7 L7.5 7.4 L10.7 11.7" stroke="#505050" stroke-width="2.2" fill="none"/></svg>
<svg class="a" style="left:887px;top:493px" width="16" height="17" viewBox="0 0 16 17"><path d="M4.3 6.5 L7.5 10.8 L10.7 6.5" stroke="#505050" stroke-width="2.2" fill="none"/></svg>
<div class="btn" style="left:34px;top:527px;width:131px;height:23px"></div>
<div class="txt " style="left:59.68px;top:529.84px;line-height:16px;font-size:12px;transform:scaleX(0.8950);">Afdrukvoorbeeld</div>
<div class="btn" style="left:275px;top:527px;width:135px;height:23px"></div>
<div class="txt " style="left:294.84px;top:529.84px;line-height:16px;font-size:12px;transform:scaleX(0.8822);">toegangslijst wissen</div>
<div class="a" id="cb"></div>
<div class="txt " style="left:563.16px;top:528.84px;line-height:16px;font-size:12px;transform:scaleX(0.8859);">Toegangenlijst voor deur</div>
<div class="btn" style="left:30px;top:708px;width:90px;height:25px"></div>
<div class="txt " style="left:48.05px;top:711.84px;line-height:16px;font-size:12px;transform:scaleX(0.9004);color:#a0a0a0;">overnemen</div>
<div class="btn" style="left:135px;top:708px;width:90px;height:25px"></div>
<div class="txt " style="left:143.54px;top:711.84px;line-height:16px;font-size:12px;transform:scaleX(0.9037);color:#a0a0a0;">eigenschappen</div>
<div class="btn" style="left:230px;top:708px;width:90px;height:25px"></div>
<div class="txt " style="left:249.53px;top:711.84px;line-height:16px;font-size:12px;transform:scaleX(0.9203);color:#a0a0a0;">toevoegen</div>
<div class="btn" style="left:325px;top:708px;width:90px;height:25px"></div>
<div class="txt " style="left:342.35px;top:711.84px;line-height:16px;font-size:12px;transform:scaleX(0.8780);color:#a0a0a0;">Verwijderen</div>
<div class="btn" style="left:430px;top:708px;width:90px;height:25px"></div>
<div class="txt " style="left:447.49px;top:711.84px;line-height:16px;font-size:12px;transform:scaleX(0.9148);">b<u>e</u>ëindigen</div>
<div class="btn" style="left:525px;top:708px;width:90px;height:25px"></div>
<div class="txt " style="left:558.61px;top:711.84px;line-height:16px;font-size:12px;transform:scaleX(0.9055);"><u>H</u>elp</div>
<div class="a" id="status"></div>
<div class="txt " style="left:9.92px;top:742.84px;line-height:16px;font-size:12px;transform:scaleX(1.0091);">bereid</div>
<div class="sp" style="left:561px;width:89px"></div>
<div class="txt " style="left:562.85px;top:742.84px;line-height:16px;font-size:12px;transform:scaleX(0.9644);">PUMBA : COM5</div>
<div class="sp" style="left:653px;width:87px"></div>
<div class="txt " style="left:655.24px;top:742.84px;line-height:16px;font-size:12px;transform:scaleX(0.9678);">TPC-poort:6001</div>
<div class="sp" style="left:744px;width:24px"></div>
<div class="sp" style="left:771px;width:41px"></div>
<div class="txt " style="left:773.38px;top:742.84px;line-height:16px;font-size:12px;transform:scaleX(1.0569);">Admin</div>
<div class="sp" style="left:815px;width:28px"></div>
<div class="sp" style="left:846px;width:33px"></div>
<div class="txt " style="left:847.75px;top:742.84px;line-height:16px;font-size:12px;transform:scaleX(1.0647);">NUM</div>
<div class="sp" style="left:882px;width:32px"></div>
<svg class="a" style="left:920px;top:745px" width="14" height="14" viewBox="0 0 14 14"><path d="M12.5 1.5 L1.5 12.5 M12.5 5.5 L5.5 12.5 M12.5 9.5 L9.5 12.5" stroke="#8e8e8e" stroke-width="1.3"/><path d="M13.5 1.5 L2.5 12.5 M13.5 5.5 L6.5 12.5 M13.5 9.5 L10.5 12.5" stroke="#fff" stroke-width="1"/></svg>
</body></html>
